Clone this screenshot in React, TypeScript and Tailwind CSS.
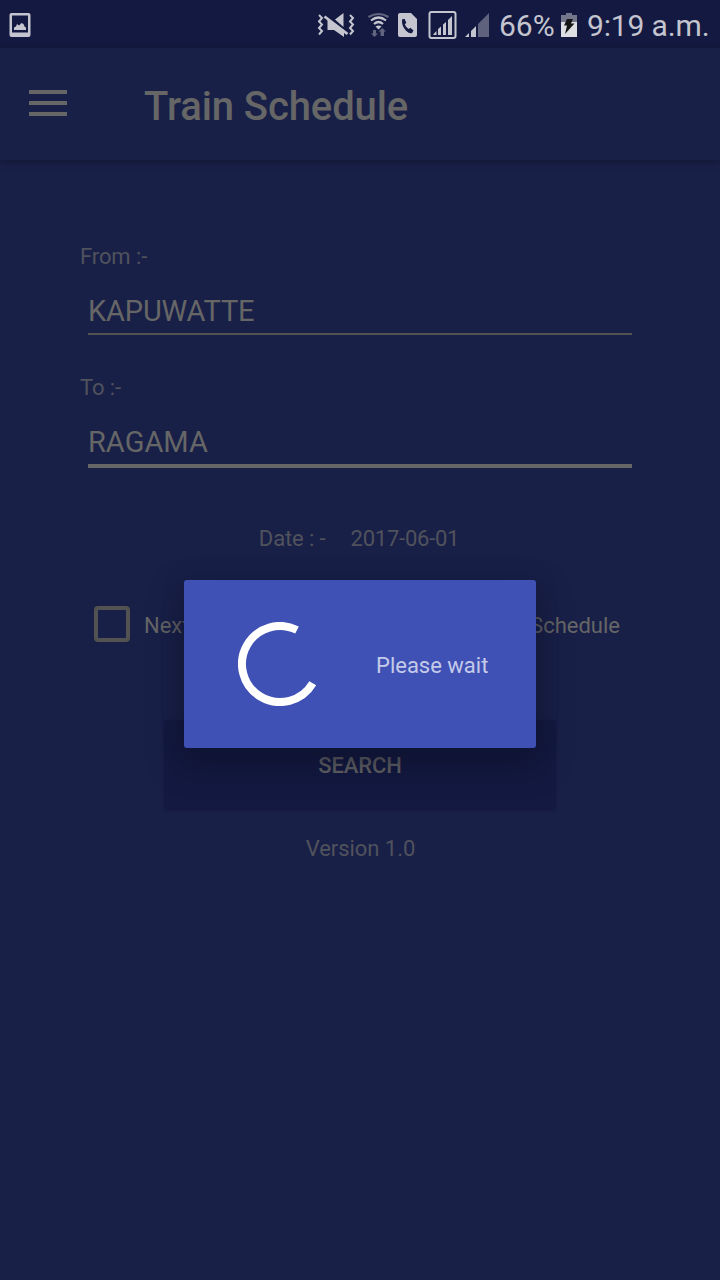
function StatusBar() {
  return (
    <div className="flex h-12 shrink-0 items-center bg-[#131940] text-[#c4c5cf]">
      <svg className="ml-2 shrink-0" width="24" height="48" viewBox="8 0 24 48">
        <path fill="currentColor" fillRule="evenodd" d="M11.500 13h17a2 2 0 0 1 2 2v20a2 2 0 0 1-2 2h-17a2 2 0 0 1-2-2V15a2 2 0 0 1 2-2Zm.5 2.500v17h16v-17Z" />
        <path fill="currentColor" d="M14 30v-2.500l2-1 1-2.500 2 1.500 2.500-2.500 2 1 1 2.500 1.500 1V30Z" />
      </svg>
      <svg className="ml-[284px] shrink-0" width="40" height="48" viewBox="316 0 40 48">
        <path d="m319 15 3 3-3 3.500 3 3-3 3.500 3 3-3 3.500M350 15l3 3-3 3.500 3 3-3 3.500 3 3-3 3.500" fill="none" stroke="currentColor" strokeWidth="2" />
        <path d="M335 19.500 343.500 13v14ZM327.500 18 344 30v7l-10-7h-6.500Z" fill="currentColor" />
        <path d="m324.500 16.500 23 17.500" stroke="currentColor" strokeWidth="2.800" />
        <path d="m327.500 15.800 17 13" stroke="#131940" strokeWidth="1" />
      </svg>
      <svg className="ml-3 shrink-0" width="22" height="48" viewBox="368 0 22 48" fill="none">
        <path d="M368.500 17q10-6 20 0" stroke="#60647e" strokeWidth="2.200" />
        <path d="M371 20.500q7.500-6 15 0M374 24q4.500-4 9 0" stroke="currentColor" strokeWidth="2.200" />
        <path d="m375.500 26.500 3 3 3-3q-3-2-6 0Z" fill="currentColor" />
        <path d="M373 30h3v3.500h2L374.500 37l-3.500-3.500h2ZM380.500 36v-4.500h-2l3.700-3.500 3.800 3.500h-2V36Z" fill="#60647e" />
      </svg>
      <svg className="ml-2 shrink-0" width="20" height="48" viewBox="398 0 20 48">
        <path d="M400 13h11l6 6v16a2 2 0 0 1-2 2h-15a2 2 0 0 1-2-2V15a2 2 0 0 1 2-2Z" fill="currentColor" />
        <path d="m402 19.500 2.500-.8 1.800 4-1.500 1.600q1 3 3.800 4.700l1.800-1.300 3.100 2.700-1.400 2.500q-2.500 1-5.800-2-4.800-4.700-4.300-11.400Z" fill="#131940" />
      </svg>
      <svg className="ml-2.5 shrink-0" width="30" height="48" viewBox="428 0 30 48">
        <rect x="429.500" y="12" width="26" height="26" rx="2" fill="none" stroke="currentColor" strokeWidth="2" />
        <path d="M433.500 35v-1l3-3v4ZM438 35v-6l3-2.500V35ZM443 35V24.500l3-2.500v13ZM448 35V20l4-4v19Z" fill="currentColor" />
      </svg>
      <svg className="ml-1.5 shrink-0" width="26" height="48" viewBox="464 0 26 48">
        <path d="m465 37 4-4v4ZM471 37v-6l5-5v11Z" fill="currentColor" />
        <path d="M478 37V24l11-11v24Z" fill="#5e627c" />
      </svg>
      <span className="mt-[3px] ml-[9px] w-[61px] text-[30px] leading-12 whitespace-nowrap">66%</span>
      <svg className="shrink-0" width="18" height="48" viewBox="560 0 18 48">
        <path d="M561 15h5v-2h6v2h5v8h-16Z" fill="#74778c" />
        <path d="M561 22h16v15h-16Z" fill="#dedfe4" />
        <path d="M567 19h6l-2 4.500h3.500L565 34l2-8.500h-3Z" fill="#151515" />
      </svg>
      <span className="mt-[3px] ml-[9px] text-[30px] leading-12 tracking-[-0.15px] whitespace-nowrap">9:19 a.m.</span>
    </div>
  );
}

function StationField({ label, value, focused }: { label: string; value: string; focused?: boolean }) {
  return (
    <div className="flex flex-col">
      <label className="h-[30px] text-[22px] leading-[30px] tracking-[-0.1px] text-[#50525c]">{label}</label>
      <div
        className={
          focused
            ? "mx-2 mt-[20px] flex h-[45px] flex-col border-b-4 border-[#666666] text-[29px] leading-[38px] text-[#666666]"
            : "mx-2 mt-[20px] flex h-[43px] flex-col border-b-2 border-[#525252] text-[29px] leading-[38px] tracking-[-0.15px] text-[#666666]"
        }
      >
        {value}
      </div>
    </div>
  );
}

function WaitDialog() {
  return (
    <div role="dialog" className="absolute top-[580px] left-[184px] flex h-[168px] w-[352px] items-center rounded-[3px] bg-[#3f51b5] shadow-[0_14px_32px_rgba(13,17,40,0.6),0_0_24px_rgba(16,20,42,0.15)]">
      <svg className="ml-[54px]" width="84" height="84" viewBox="0 0 84 84">
        <circle cx="42" cy="42" r="38" fill="none" stroke="white" strokeWidth="8" pathLength="360" strokeDasharray="266 94" transform="rotate(30.500 42 42)" />
      </svg>
      <span className="mt-[3px] ml-[54px] text-[22px] text-[#c5cae9]">Please wait</span>
    </div>
  );
}

export default function App() {
  return (
    <div className="relative flex h-[1280px] w-[720px] flex-col overflow-hidden bg-[#192048] font-['Roboto',sans-serif]">
      <StatusBar />
      <header className="flex h-28 shrink-0 items-center bg-[#192048] shadow-[0_2px_6px_rgba(15,18,38,0.6)]">
        <div className="-mt-0.5 ml-[29px] flex h-[26px] w-[38px] flex-col justify-between">
          <span className="h-1 bg-[#666666]" />
          <span className="h-1 bg-[#666666]" />
          <span className="h-1 bg-[#666666]" />
        </div>
        <h1 className="mt-1.5 ml-[77px] text-[40px] leading-[48px] font-medium tracking-[-0.1px] text-[#666666]">Train Schedule</h1>
      </header>
      <main className="flex flex-col px-20 pt-[82px]">
        <StationField label="From :-" value="KAPUWATTE" />
        <div className="mt-[38px]">
          <StationField label="To :-" value="RAGAMA" focused />
        </div>
        <div className="mt-14 flex h-[30px] justify-center pr-0.5 text-[22px] leading-[30px] text-[#50525c]">
          <span className="mr-[25px] tracking-[-0.1px]">Date : -</span>
          <span className="tracking-[-0.25px]">2017-06-01</span>
        </div>
        <div className="mt-[52px] flex h-9 items-center justify-between pr-5 pl-3.5 text-[22px] text-[#666666]">
          <div className="flex items-center">
            <span className="size-9 rounded-[4px] border-4 border-[#525252]" />
            <span className="mt-[3px] ml-3.5">Next</span>
          </div>
          <span className="mt-[3px]">Schedule</span>
        </div>
        <button className="mx-[84px] mt-[78px] h-[90px] rounded-[4px] bg-[#131940] text-[22px] font-medium tracking-[-0.1px] text-[#666666] shadow-[0_1px_3px_rgba(18,20,50,0.4)]">
          SEARCH
        </button>
        <p className="mt-6 pl-px text-center text-[22px] leading-[30px] tracking-[-0.05px] text-[#50525c]">Version 1.0</p>
      </main>
      <WaitDialog />
    </div>
  );
}
